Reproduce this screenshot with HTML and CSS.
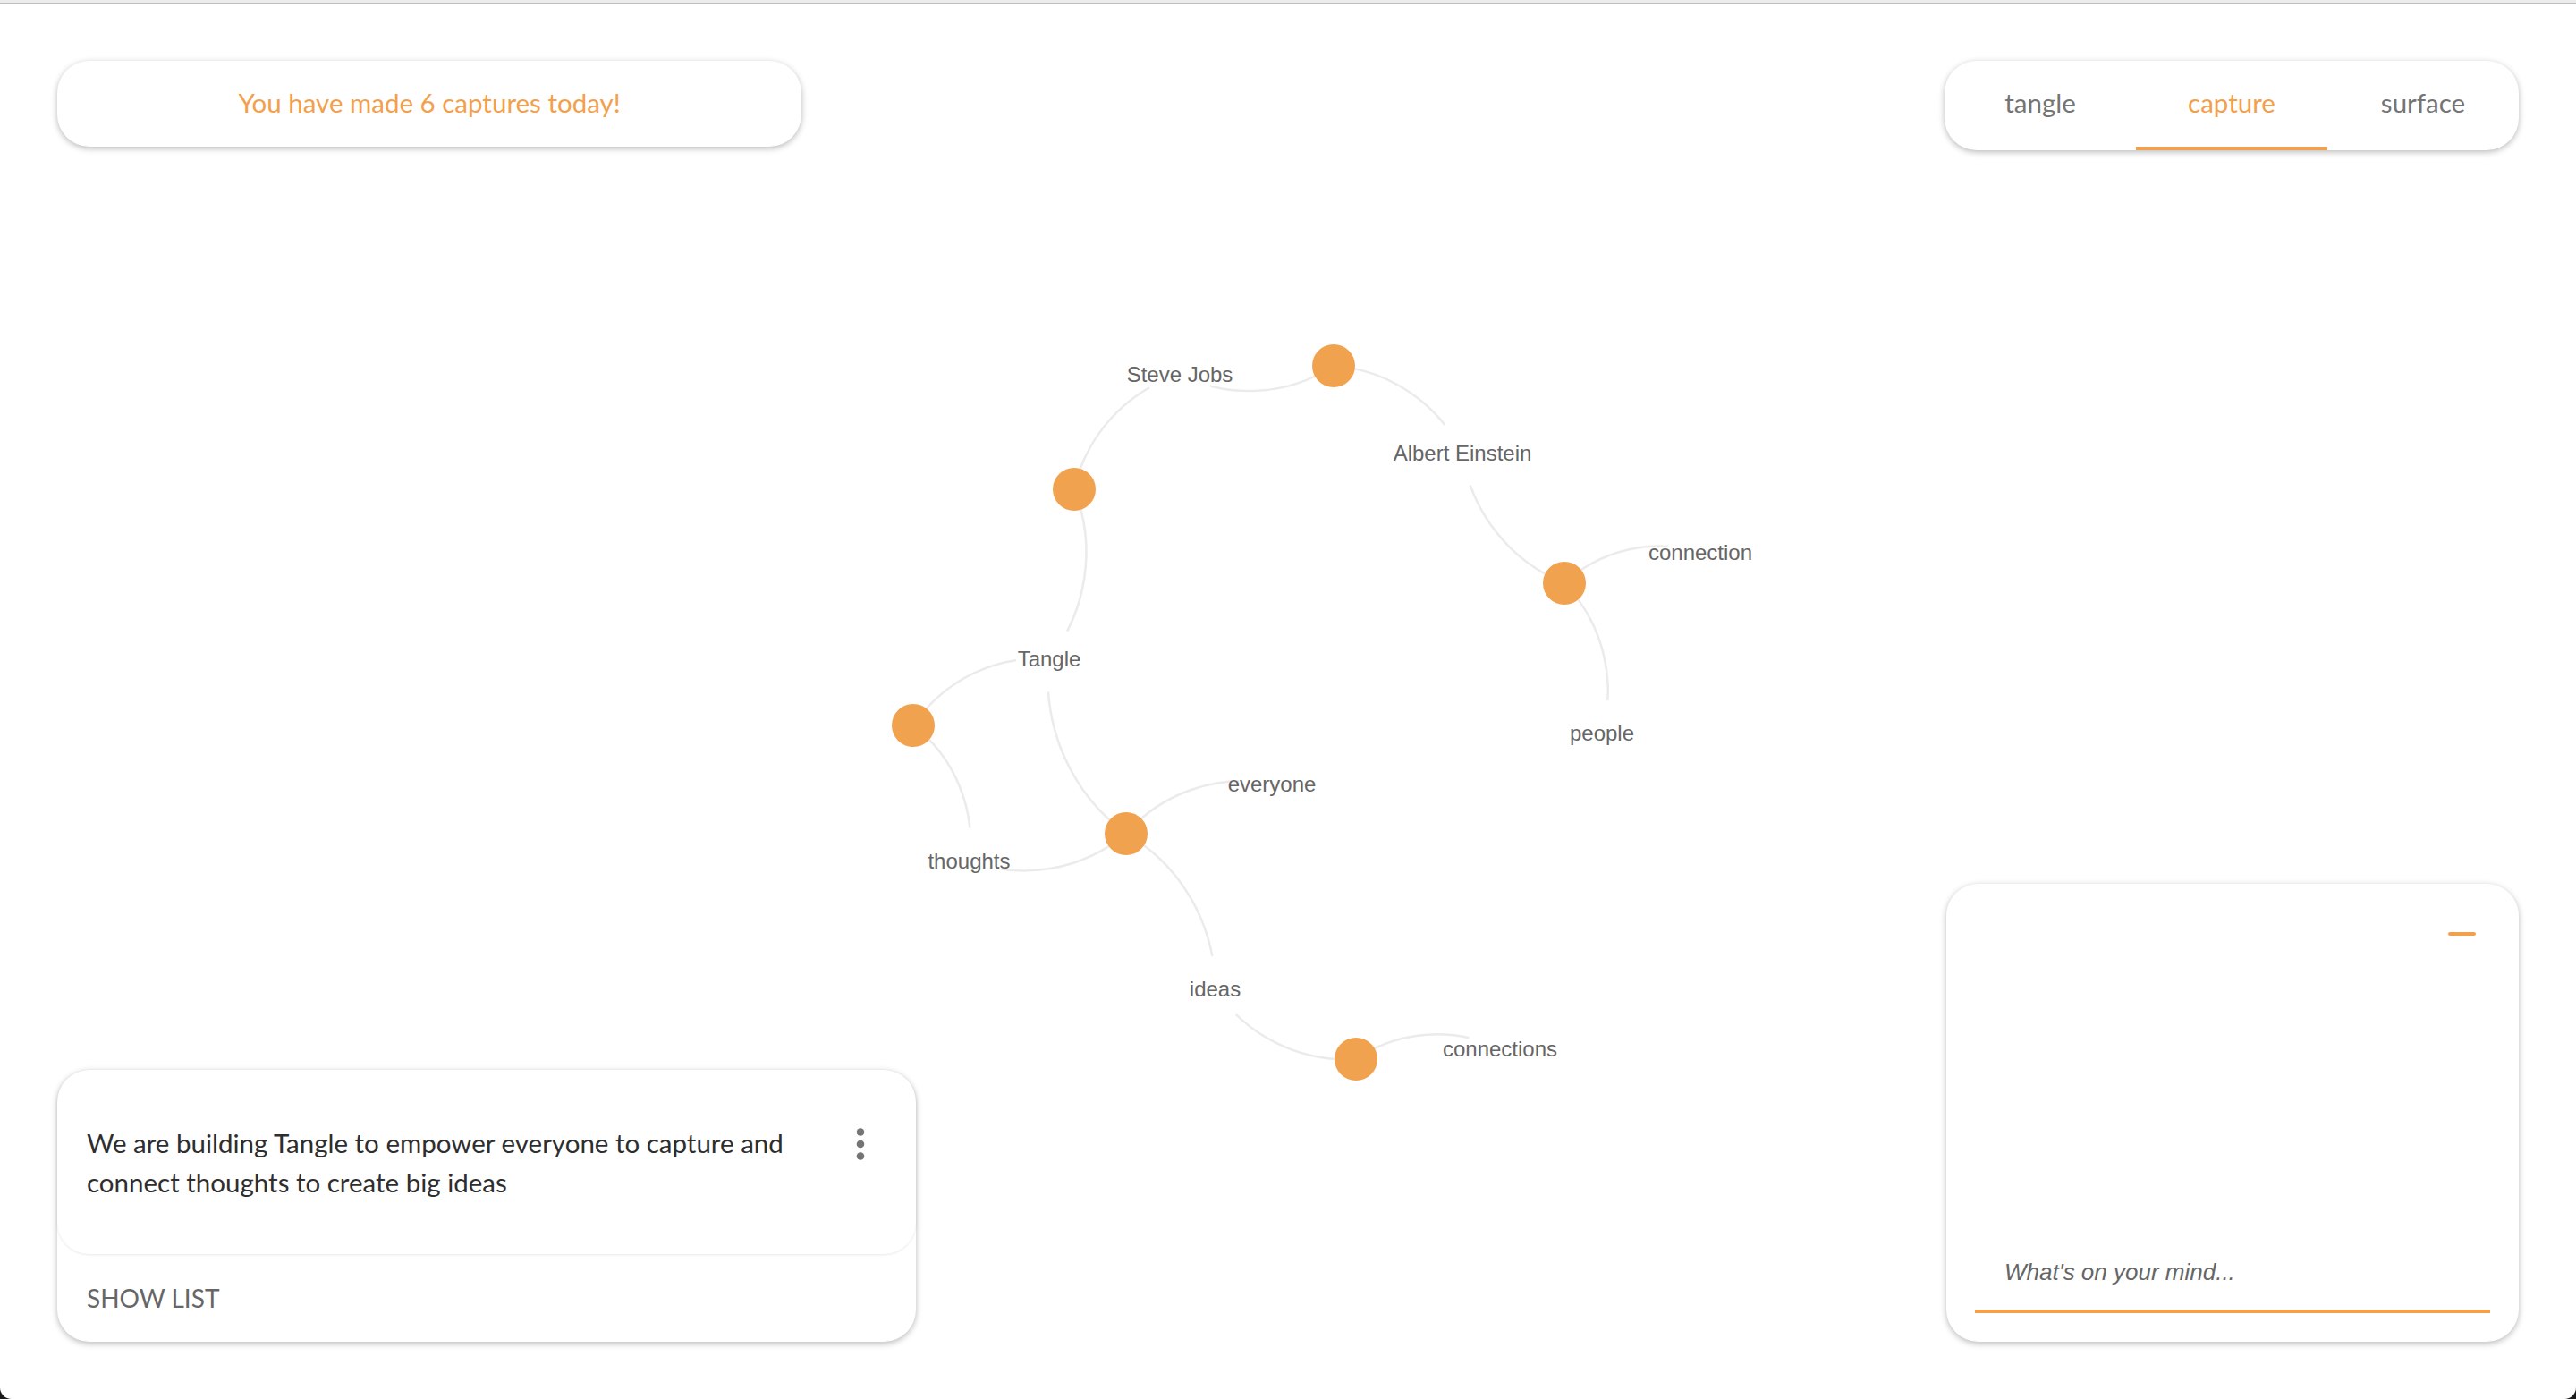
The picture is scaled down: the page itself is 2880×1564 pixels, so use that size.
FILE: index.html
```html
<!DOCTYPE html>
<html lang="en">
<head>
<meta charset="utf-8">
<title>Tangle – capture</title>
<link rel="stylesheet" href="styles.css">
</head>
<body>
<div class="topbar"></div>

<svg class="graph" width="2880" height="1564" viewBox="0 0 2880 1564" xmlns="http://www.w3.org/2000/svg">
  <g class="links">
    <path d="M1491,409 A172.3,172.3 0 0,1 1319,418.6"/>
    <path d="M1491,409 A174,174 0 0,1 1635,506.6"/>
    <path d="M1201,547 A174.4,174.4 0 0,1 1319,418.6"/>
    <path d="M1201,547 A191.7,191.7 0 0,1 1173,736.6"/>
    <path d="M1749,652 A184.8,184.8 0 0,1 1635,506.6"/>
    <path d="M1749,652 A155.8,155.8 0 0,1 1901,617.6"/>
    <path d="M1749,652 A172.8,172.8 0 0,1 1791,819.6"/>
    <path d="M1021,811 A169.2,169.2 0 0,1 1173,736.6"/>
    <path d="M1021,811 A164,164 0 0,1 1083.5,962.6"/>
    <path d="M1259,932 A213.5,213.5 0 0,1 1173,736.6"/>
    <path d="M1259,932 A172.2,172.2 0 0,1 1422,876.6"/>
    <path d="M1259,932 A178.1,178.1 0 0,1 1083.5,962.6"/>
    <path d="M1259,932 A200.1,200.1 0 0,1 1358.5,1105.6"/>
    <path d="M1516,1184 A175.9,175.9 0 0,1 1358.5,1105.6"/>
    <path d="M1516,1184 A161.4,161.4 0 0,1 1677,1172.6"/>
  </g>
  <g class="label-masks">
    <circle cx="1319" cy="418.6" r="37"/>
    <circle cx="1635" cy="506.6" r="37"/>
    <circle cx="1901" cy="617.6" r="37"/>
    <circle cx="1173" cy="736.6" r="37"/>
    <circle cx="1791" cy="819.6" r="37"/>
    <circle cx="1422" cy="876.6" r="37"/>
    <circle cx="1083.5" cy="962.6" r="37"/>
    <circle cx="1358.5" cy="1105.6" r="37"/>
    <circle cx="1677" cy="1172.6" r="37"/>
  </g>
  <g class="nodes">
    <circle cx="1491" cy="409" r="24"/>
    <circle cx="1201" cy="547" r="24"/>
    <circle cx="1749" cy="652" r="24"/>
    <circle cx="1021" cy="811" r="24"/>
    <circle cx="1259" cy="932" r="24"/>
    <circle cx="1516" cy="1184" r="24"/>
  </g>
  <g class="labels">
    <text x="1319" y="427">Steve Jobs</text>
    <text x="1635" y="515">Albert Einstein</text>
    <text x="1901" y="626">connection</text>
    <text x="1173" y="745">Tangle</text>
    <text x="1791" y="828">people</text>
    <text x="1422" y="885">everyone</text>
    <text x="1083.5" y="971">thoughts</text>
    <text x="1358.5" y="1114">ideas</text>
    <text x="1677" y="1181">connections</text>
  </g>
</svg>

<div class="app">
  <div class="top-row">
    <div class="pill">You have made 6 captures today!</div>
    <nav class="tabs">
      <a class="tab">tangle</a>
      <a class="tab active">capture</a>
      <a class="tab">surface</a>
    </nav>
  </div>

  <div class="bottom-row">
    <div class="card note-card">
      <div class="note">
        <p class="note-text">We are building Tangle to empower everyone to capture and connect thoughts to create big ideas</p>
        <svg class="kebab" width="10" height="36" viewBox="0 0 10 36" xmlns="http://www.w3.org/2000/svg">
          <circle cx="5" cy="4.5" r="4.3"/>
          <circle cx="5" cy="18" r="4.3"/>
          <circle cx="5" cy="31.5" r="4.3"/>
        </svg>
      </div>
      <div class="show-list">SHOW LIST</div>
    </div>

    <div class="card capture-card">
      <div class="capture-head"><span class="minimize"></span></div>
      <div class="capture-input">What's on your mind...</div>
    </div>
  </div>
</div>
</body>
</html>
```

FILE: styles.css
```css
html {
  margin: 0;
  background: #1b1b1d;
}

body {
  margin: 0;
  width: 2880px;
  height: 1564px;
  background: #ffffff;
  border-radius: 0 0 13px 13px;
  overflow: hidden;
  position: relative;
  font-family: "Lato", "Open Sans", sans-serif;
}

.topbar {
  height: 3px;
  background: #ececec;
  border-bottom: 1px solid #bdbdbd;
}

.graph {
  position: absolute;
  top: 0;
  left: 0;
}

.links path {
  fill: none;
  stroke: #ebebeb;
  stroke-width: 2.5;
}

.label-masks circle {
  fill: #ffffff;
}

.nodes circle {
  fill: #f1a24f;
}

.labels text {
  font-family: "Liberation Sans", Arial, sans-serif;
  font-size: 24px;
  fill: #666666;
  text-anchor: middle;
}

.app {
  position: relative;
  box-sizing: border-box;
  height: 1560px;
  padding: 64px;
  display: flex;
  flex-direction: column;
  justify-content: space-between;
}

.top-row {
  display: flex;
  justify-content: space-between;
  align-items: flex-start;
}

.bottom-row {
  display: flex;
  justify-content: space-between;
  align-items: flex-end;
}

.pill,
.tabs,
.card {
  background: #ffffff;
  border-radius: 36px;
  box-shadow: 0 2px 7px rgba(0, 0, 0, 0.28);
}

.pill {
  width: 832px;
  height: 96px;
  box-sizing: border-box;
  padding-bottom: 4px;
  display: flex;
  align-items: center;
  justify-content: center;
  color: #f2a04c;
  font-size: 29.5px;
}

.tabs {
  width: 642px;
  height: 100px;
  display: flex;
  overflow: hidden;
}

.tab {
  flex: 1;
  display: flex;
  align-items: center;
  justify-content: center;
  font-size: 29.5px;
  color: #757575;
  padding-bottom: 4px;
  box-sizing: border-box;
  border-bottom: 4px solid transparent;
}

.tab.active {
  color: #f2a04c;
  border-bottom-color: #f2a04c;
}

.note-card {
  width: 960px;
  height: 304px;
  display: flex;
  flex-direction: column;
}

.note {
  height: 206px;
  box-sizing: border-box;
  border-radius: 36px;
  box-shadow: 0 1px 3px rgba(0, 0, 0, 0.09);
  padding: 60px 57px 0 33px;
  display: flex;
  justify-content: space-between;
  align-items: flex-start;
}

.note-text {
  margin: 0;
  width: 820px;
  font-size: 29.5px;
  line-height: 44px;
  color: #2e2e2e;
}

.kebab {
  margin-top: 5px;
  fill: #757575;
}

.show-list {
  flex: 1;
  display: flex;
  align-items: center;
  padding-left: 33px;
  font-size: 28px;
  color: #666666;
}

.capture-card {
  width: 640px;
  height: 512px;
  display: flex;
  flex-direction: column;
  justify-content: space-between;
}

.capture-head {
  display: flex;
  justify-content: flex-end;
  padding: 54px 48px 0 0;
}

.minimize {
  width: 31px;
  height: 4px;
  border-radius: 2px;
  background: #f2a04c;
}

.capture-input {
  margin: 0 32px 32px;
  padding: 0 0 22px 33px;
  border-bottom: 4px solid #f2a04c;
  font-family: "Liberation Sans", Arial, sans-serif;
  font-style: italic;
  font-size: 26px;
  line-height: 40px;
  color: #666666;
}
```
